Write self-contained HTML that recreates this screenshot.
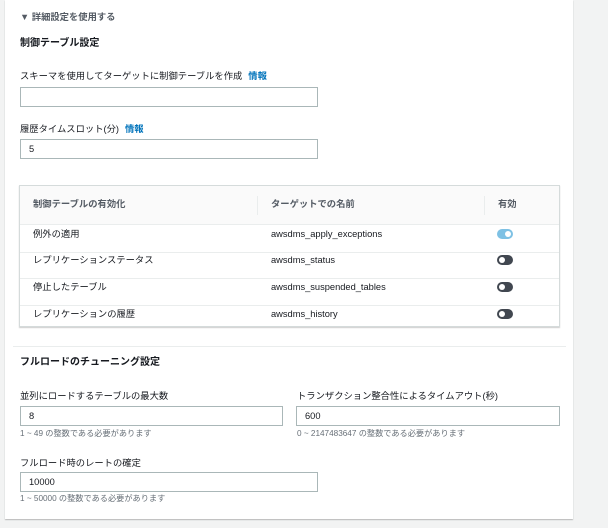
<!DOCTYPE html>
<html><head><meta charset="utf-8"><style>
*{margin:0;padding:0;box-sizing:border-box}
body{width:608px;height:528px;background:#f2f3f3;font-family:"Liberation Sans","Noto Sans CJK JP",sans-serif;color:#16191f;position:relative;overflow:hidden}
.panel{position:absolute;left:5px;top:0;width:568px;height:519px;background:#fff;box-shadow:0 1px 1px rgba(0,0,0,.25)}
.a{position:absolute;white-space:nowrap;font-size:9.3px;line-height:12px}
.b{font-weight:bold}
.l{color:#0073bb;font-weight:bold;margin-left:6px}
.in{position:absolute;border:1px solid #aab7b8;background:#fff;height:20px;font-size:9.3px;line-height:18px;padding-left:8px}
.h{position:absolute;font-size:8.2px;color:#687078;white-space:nowrap;line-height:10px}
.tbl{position:absolute;left:19px;top:185px;width:541px;height:142px;border:1px solid #d5dbdb;box-shadow:0 1px 1px rgba(0,0,0,.2)}
.hd{position:absolute;left:0;top:0;width:100%;height:39px;background:#fafafa;border-bottom:1px solid #eaeded}
.row{position:absolute;left:0;width:100%;border-bottom:1px solid #eaeded}
.sep{position:absolute;top:10px;width:1px;height:19px;background:#eaeded}
.tg{position:absolute;left:477px;width:16px;height:10px;border-radius:5px;background:#414750}
.tg::after{content:"";position:absolute;left:2px;top:2px;width:6px;height:6px;border-radius:50%;background:#fff}
.tg.on{background:#7ec1e4}.tg.on::after{left:8px}
</style></head><body>
<div class="panel"></div>
<div class="a b" style="left:20px;top:11px;color:#545b64">▼ 詳細設定を使用する</div>
<div class="a b" style="left:20px;top:38px;font-size:10px">制御テーブル設定</div>
<div class="a" style="left:20px;top:70px">スキーマを使用してターゲットに制御テーブルを作成<span class="l">情報</span></div>
<div class="in" style="left:20px;top:87px;width:298px"></div>
<div class="a" style="left:20px;top:123px">履歴タイムスロット(分)<span class="l">情報</span></div>
<div class="in" style="left:20px;top:139px;width:298px">5</div>
<div class="tbl">
<div class="hd"></div>
<div class="sep" style="left:237px"></div><div class="sep" style="left:464px"></div>
<div class="a b" style="left:13px;top:12px;color:#545b64">制御テーブルの有効化</div>
<div class="a b" style="left:251px;top:12px;color:#545b64">ターゲットでの名前</div>
<div class="a b" style="left:478px;top:12px;color:#545b64">有効</div>
<div class="row" style="top:39px;height:28px"></div>
<div class="row" style="top:67px;height:26px"></div>
<div class="row" style="top:93px;height:27px"></div>
<div class="a" style="left:13px;top:42px">例外の適用</div><div class="a" style="left:251px;top:42px">awsdms_apply_exceptions</div><div class="tg on" style="top:43px"></div>
<div class="a" style="left:13px;top:68px">レプリケーションステータス</div><div class="a" style="left:251px;top:68px">awsdms_status</div><div class="tg" style="top:69px"></div>
<div class="a" style="left:13px;top:95px">停止したテーブル</div><div class="a" style="left:251px;top:95px">awsdms_suspended_tables</div><div class="tg" style="top:96px"></div>
<div class="a" style="left:13px;top:122px">レプリケーションの履歴</div><div class="a" style="left:251px;top:122px">awsdms_history</div><div class="tg" style="top:123px"></div>
</div>
<div style="position:absolute;left:13px;top:346px;width:553px;height:1px;background:#eaeded"></div>
<div class="a b" style="left:20px;top:357px;font-size:10px">フルロードのチューニング設定</div>
<div class="a" style="left:20px;top:390px">並列にロードするテーブルの最大数</div>
<div class="a" style="left:297px;top:390px">トランザクション整合性によるタイムアウト(秒)</div>
<div class="in" style="left:20px;top:406px;width:263px">8</div>
<div class="in" style="left:296px;top:406px;width:264px">600</div>
<div class="h" style="left:20px;top:429px">1 ~ 49 の整数である必要があります</div>
<div class="h" style="left:297px;top:429px">0 ~ 2147483647 の整数である必要があります</div>
<div class="a" style="left:20px;top:457px">フルロード時のレートの確定</div>
<div class="in" style="left:20px;top:472px;width:298px">10000</div>
<div class="h" style="left:20px;top:494px">1 ~ 50000 の整数である必要があります</div>
</body></html>
